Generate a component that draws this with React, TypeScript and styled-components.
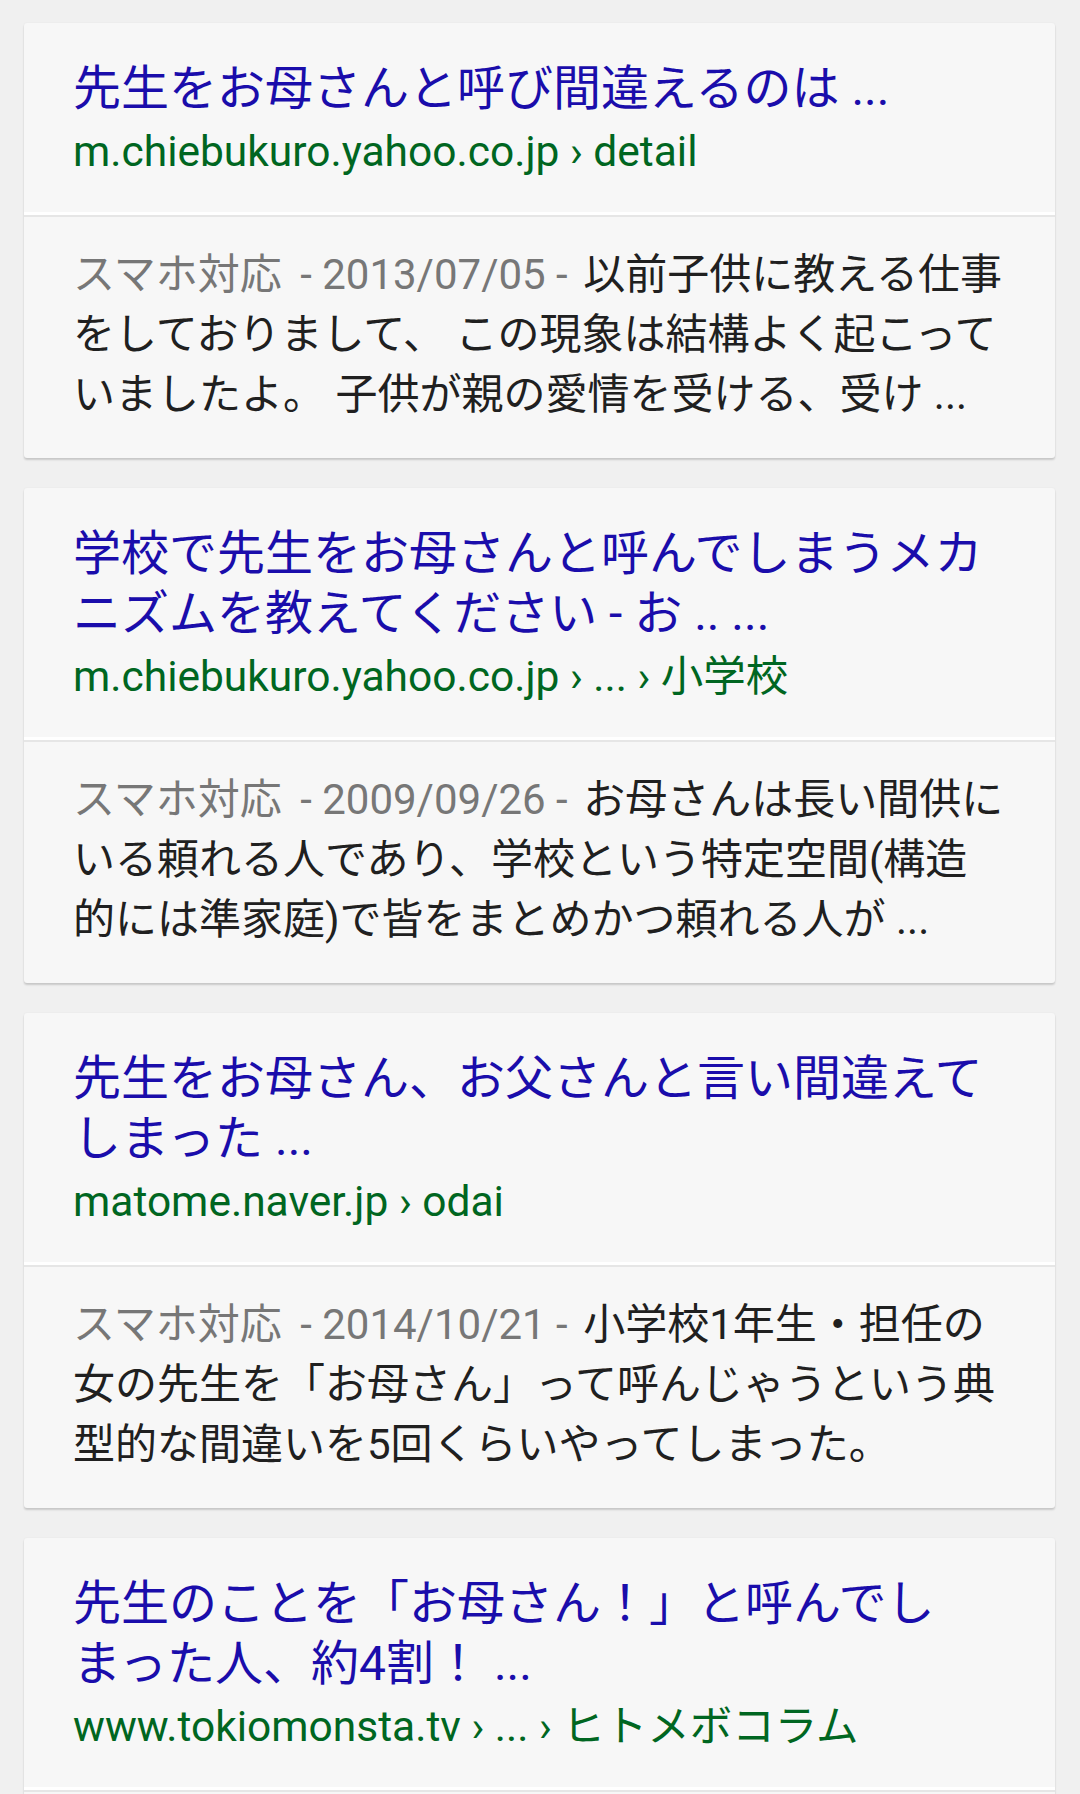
import * as React from "react";
import styled, { createGlobalStyle } from "styled-components";

const GlobalStyle = createGlobalStyle`
  html, body {
    margin: 0;
    padding: 0;
    background: #f0f0f0;
  }
  body {
    font-family: Roboto, "Noto Sans CJK JP", "Noto Sans", sans-serif;
  }
`;

const Page = styled.div`
  display: flex;
  flex-direction: column;
  gap: 30px;
  padding: 23px 25px 0 24px;
  min-height: 1794px;
  box-sizing: border-box;
  overflow: hidden;
`;

const Card = styled.div`
  background: #f7f7f7;
  border-radius: 3px;
  box-shadow: 0 2px 2px rgba(0, 0, 0, 0.16), 0 0 2px rgba(0, 0, 0, 0.06);
`;

const Head = styled.div`
  padding: 36px 48px 30px 49px;
  border-bottom: 3px solid #ffffff;
`;

const Title = styled.div`
  color: #1a0dab;
  font-size: 48px;
  line-height: 60px;
  white-space: nowrap;
`;

const Url = styled.div`
  color: #006621;
  font-size: 42.5px;
  line-height: 60px;
  margin-top: 3px;
  white-space: nowrap;
`;

const Snippet = styled.div<{ $empty?: boolean }>`
  border-top: 2px solid #e6e6e6;
  padding: ${(p) => (p.$empty ? "0" : "28px 48px 33px 49px")};
  min-height: ${(p) => (p.$empty ? "60px" : "0")};
`;

const Line = styled.div`
  color: #202020;
  font-size: 42px;
  line-height: 60px;
  white-space: nowrap;
`;

const Meta = styled.span`
  color: #777777;
`;

// extra room around the dashes, the phone's spaces are wider than Roboto's
const Gap = styled.span<{ $w: number }>`
  display: inline-block;
  width: ${(p) => p.$w}px;
`;

type Result = {
  title: string[];
  url: string;
  date?: string;
  lines?: string[];
};

const results: Result[] = [
  {
    title: ["先生をお母さんと呼び間違えるのは ..."],
    url: "m.chiebukuro.yahoo.co.jp › detail",
    date: "2013/07/05",
    lines: [
      "以前子供に教える仕事",
      "をしておりまして、 この現象は結構よく起こって",
      "いましたよ。 子供が親の愛情を受ける、受け ...",
    ],
  },
  {
    title: ["学校で先生をお母さんと呼んでしまうメカ", "ニズムを教えてください - お .. ..."],
    url: "m.chiebukuro.yahoo.co.jp › ... › 小学校",
    date: "2009/09/26",
    lines: [
      "お母さんは長い間供に",
      "いる頼れる人であり、学校という特定空間(構造",
      "的には準家庭)で皆をまとめかつ頼れる人が ...",
    ],
  },
  {
    title: ["先生をお母さん、お父さんと言い間違えて", "しまった ..."],
    url: "matome.naver.jp › odai",
    date: "2014/10/21",
    lines: [
      "小学校1年生・担任の",
      "女の先生を「お母さん」って呼んじゃうという典",
      "型的な間違いを5回くらいやってしまった。",
    ],
  },
  {
    title: ["先生のことを「お母さん！」と呼んでし", "まった人、約4割！ ..."],
    url: "www.tokiomonsta.tv › ... › ヒトメボコラム",
  },
];

const ResultCard = ({ r }: { r: Result }) => (
  <Card>
    <Head>
      {r.title.map((t, i) => (
        <Title key={i}>{t}</Title>
      ))}
      <Url>{r.url}</Url>
    </Head>
    {r.lines ? (
      <Snippet>
        {r.lines.map((l, i) => (
          <Line key={i}>
            {i === 0 && r.date ? (
              <Meta>
                スマホ対応<Gap $w={8} /> - {r.date} - <Gap $w={5} />
              </Meta>
            ) : null}
            {l}
          </Line>
        ))}
      </Snippet>
    ) : (
      <Snippet $empty />
    )}
  </Card>
);

export default function App() {
  return (
    <>
      <GlobalStyle />
      <Page>
        {results.map((r, i) => (
          <ResultCard key={i} r={r} />
        ))}
      </Page>
    </>
  );
}
